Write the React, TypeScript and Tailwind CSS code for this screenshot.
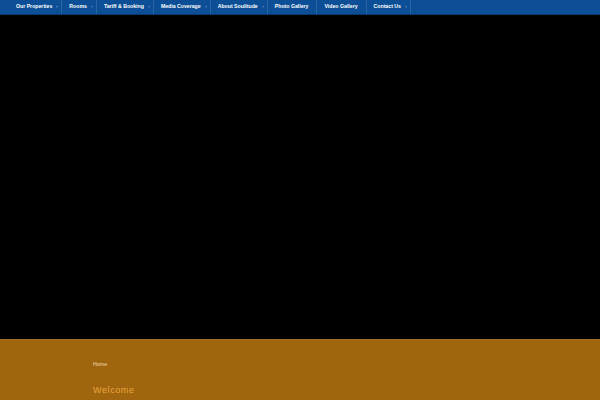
const navItems = [
  { label: "Our Properties", drop: true },
  { label: "Rooms", drop: true },
  { label: "Tariff & Booking", drop: true },
  { label: "Media Coverage", drop: true },
  { label: "About Soulitude", drop: true },
  { label: "Photo Gallery", drop: false },
  { label: "Video Gallery", drop: false },
  { label: "Contact Us", drop: true },
];

const App = () => {
  return (
    <div className="flex h-[400px] w-[600px] flex-col overflow-hidden bg-black font-['Liberation_Sans',Arial,sans-serif]">
      <nav className="flex h-[15px] shrink-0 border-b border-[#083a70] bg-[#0c4f96] pl-[9px]">
        {navItems.map((item) => (
          <div
            key={item.label}
            className="flex h-[14px] items-center border-r border-[#2a64a3] pl-[7px]"
          >
            <span className="text-[5.2px] font-bold whitespace-nowrap text-white">
              {item.label}
            </span>
            {item.drop ? (
              <span className="ml-[4px] mr-[3px] h-0 w-0 border-x-[1.5px] border-t-[2px] border-x-transparent border-t-[#4f80b8]" />
            ) : (
              <span className="w-[8px]" />
            )}
          </div>
        ))}
      </nav>

      <div className="h-[324px] shrink-0 bg-black" />

      <section className="flex-1 border-t border-[#a86c1c] bg-[#9f650f] pl-[93px] pt-[20px]">
        <p className="text-[5.3px] leading-[8px] text-[#f3dfb4]">Home</p>
        <h1 className="mt-[16px] text-[9px] font-normal leading-[12px] tracking-[0.6px] text-[#eba63c]">
          Welcome
        </h1>
      </section>
    </div>
  );
};

export default App;
